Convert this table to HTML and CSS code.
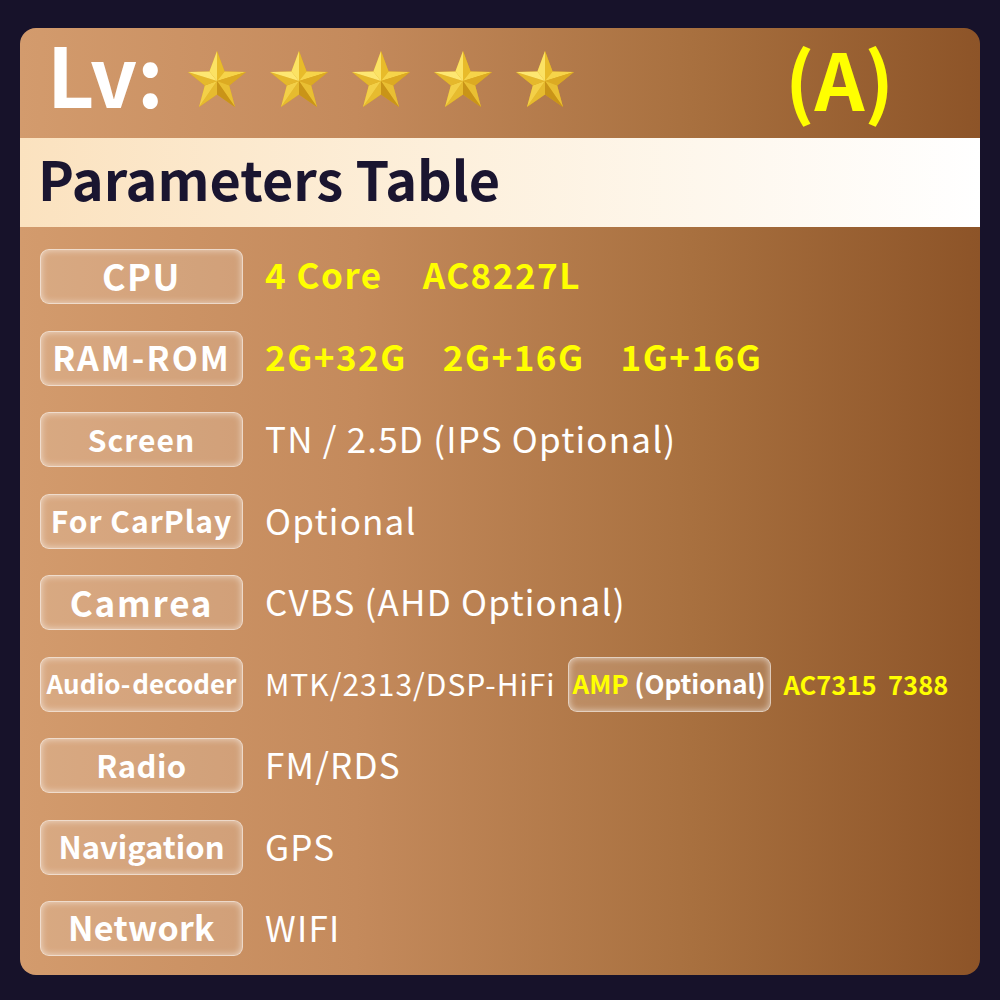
FILE: index.html
```html
<!DOCTYPE html>
<html lang="en">
<head>
  <meta charset="UTF-8">
  <title>Parameters Table</title>
  <link rel="stylesheet" href="styles.css">
</head>
<body>
  <svg width="0" height="0" class="defs">
    <defs>
      <symbol id="star" viewBox="0 0 60 58">
        <!-- faceted gold star: each arm split into a light and a dark half -->
        <polygon points="30,1 37.6,21.5 59,22 42.2,35.5 48,57 30,44.5 12,57 17.8,35.5 1,22 22.4,21.5" fill="#d9a41c"/>
        <polygon points="30,31 30,1 22.4,21.5" fill="#fbe264"/>
        <polygon points="30,31 30,1 37.6,21.5" fill="#e8bb2a"/>
        <polygon points="30,31 59,22 37.6,21.5" fill="#f6d44a"/>
        <polygon points="30,31 59,22 42.2,35.5" fill="#dcaa22"/>
        <polygon points="30,31 48,57 42.2,35.5" fill="#e9bf33"/>
        <polygon points="30,31 48,57 30,44.5" fill="#c99418"/>
        <polygon points="30,31 12,57 30,44.5" fill="#e6bb2f"/>
        <polygon points="30,31 12,57 17.8,35.5" fill="#f3d048"/>
        <polygon points="30,31 1,22 17.8,35.5" fill="#e5b82c"/>
        <polygon points="30,31 1,22 22.4,21.5" fill="#fde772"/>
      </symbol>
    </defs>
  </svg>

  <div class="card">
    <div class="level">
      <span class="lv">Lv:</span>
      <div class="stars">
        <svg class="star"><use href="#star"/></svg>
        <svg class="star"><use href="#star"/></svg>
        <svg class="star"><use href="#star"/></svg>
        <svg class="star"><use href="#star"/></svg>
        <svg class="star"><use href="#star"/></svg>
      </div>
      <span class="grade">(A)</span>
    </div>

    <div class="band"><span>Parameters Table</span></div>

    <div class="rows">
      <div class="row">
        <div class="tag tag-cpu">CPU</div>
        <div class="val hl">4 Core<span class="sp"></span>AC8227L</div>
      </div>
      <div class="row">
        <div class="tag tag-ram">RAM-ROM</div>
        <div class="val hl">2G+32G<span class="sp sp-sm"></span>2G+16G<span class="sp sp-sm"></span>1G+16G</div>
      </div>
      <div class="row">
        <div class="tag tag-screen">Screen</div>
        <div class="val">TN / 2.5D (IPS Optional)</div>
      </div>
      <div class="row">
        <div class="tag tag-carplay">For CarPlay</div>
        <div class="val">Optional</div>
      </div>
      <div class="row">
        <div class="tag tag-cam">Camrea</div>
        <div class="val">CVBS (AHD Optional)</div>
      </div>
      <div class="row">
        <div class="tag tag-audio">Audio- decoder</div>
        <div class="val val-sm">MTK/2313/DSP-HiFi</div>
        <div class="tag tag-amp"><span class="yl">AMP</span>&nbsp;(Optional)</div>
        <div class="chips">AC7315&nbsp;&nbsp;7388</div>
      </div>
      <div class="row">
        <div class="tag tag-radio">Radio</div>
        <div class="val">FM/RDS</div>
      </div>
      <div class="row">
        <div class="tag tag-nav">Navigation</div>
        <div class="val">GPS</div>
      </div>
      <div class="row">
        <div class="tag tag-net">Network</div>
        <div class="val">WIFI</div>
      </div>
    </div>
  </div>
</body>
</html>
```

FILE: styles.css
```css
html, body {
  margin: 0;
  padding: 0;
}
body {
  width: 1000px;
  height: 1000px;
  background: #17122a;
  font-family: "Noto Sans CJK SC", "Noto Sans", sans-serif;
  color: #fff;
  padding-top: 28px;
  box-sizing: border-box;
}
.defs {
  position: absolute;
}
.card {
  margin: 0 20px;
  height: 947px;
  border-radius: 16px;
  background: linear-gradient(90deg, #d39b6d 0%, #c48a5c 35%, #a8703f 70%, #8d5428 100%);
  display: flex;
  flex-direction: column;
}
.level {
  height: 110px;
  display: flex;
  align-items: center;
  padding-left: 27px;
}
.lv {
  font-size: 82px;
  font-weight: 700;
  line-height: 1;
  margin-bottom: 21px;
  width: 140px;
}
.stars {
  display: flex;
  gap: 22px;
  margin-bottom: 9px;
}
.star {
  width: 60px;
  height: 58px;
}
.grade {
  margin-left: 210px;
  font-size: 78px;
  font-weight: 700;
  color: #ffff00;
  line-height: 1;
  margin-bottom: 12px;
}
.band {
  height: 89px;
  box-sizing: border-box;
  background: linear-gradient(90deg, #fbe2bf 0%, #fdf0dc 45%, #ffffff 100%);
  color: #1a1530;
  font-size: 54px;
  font-weight: 700;
  display: flex;
  align-items: center;
  padding: 0 0 8px 18px;
  line-height: 1.2;
}
.rows {
  display: flex;
  flex-direction: column;
  gap: 26.5px;
  padding: 22px 0 0 20px;
}
.row {
  height: 55px;
  display: flex;
  align-items: center;
}
.tag {
  width: 203px;
  height: 55px;
  box-sizing: border-box;
  border-radius: 9px;
  background: rgba(255, 255, 255, 0.15);
  border: 1.5px solid rgba(255, 255, 255, 0.6);
  box-shadow: inset 0 0 7px rgba(255, 255, 255, 0.6);
  display: flex;
  align-items: center;
  justify-content: center;
  font-weight: 700;
  white-space: nowrap;
  line-height: 1.2;
  padding-bottom: 2px;
}
.tag-cpu { font-size: 36px; letter-spacing: 1.5px; }
.tag-ram { font-size: 34px; letter-spacing: 2px; }
.tag-screen { font-size: 30px; letter-spacing: 1px; }
.tag-carplay { font-size: 30px; letter-spacing: 1px; }
.tag-cam { font-size: 35px; letter-spacing: 1.8px; }
.tag-audio { font-size: 26px; word-spacing: -4px; }
.tag-radio { font-size: 31px; letter-spacing: 0.5px; }
.tag-nav { font-size: 31px; }
.tag-net { font-size: 34px; letter-spacing: 0.3px; }
.val {
  margin-left: 22px;
  font-size: 35px;
  letter-spacing: 1.2px;
  line-height: 1.2;
  white-space: nowrap;
  padding-bottom: 3px;
}
.val.hl {
  color: #ffff00;
  font-weight: 700;
  letter-spacing: 1.5px;
  padding-bottom: 5px;
}
.sp {
  display: inline-block;
  width: 40px;
}
.sp-sm {
  width: 36px;
}
.val-sm {
  font-size: 30px;
  letter-spacing: 1px;
}
.tag-amp {
  margin-left: 12px;
  font-size: 26px;
}
.yl {
  color: #ffff00;
}
.chips {
  margin-left: 13px;
  font-size: 25.5px;
  font-weight: 700;
  color: #ffff00;
  white-space: nowrap;
  line-height: 1.2;
}
```
